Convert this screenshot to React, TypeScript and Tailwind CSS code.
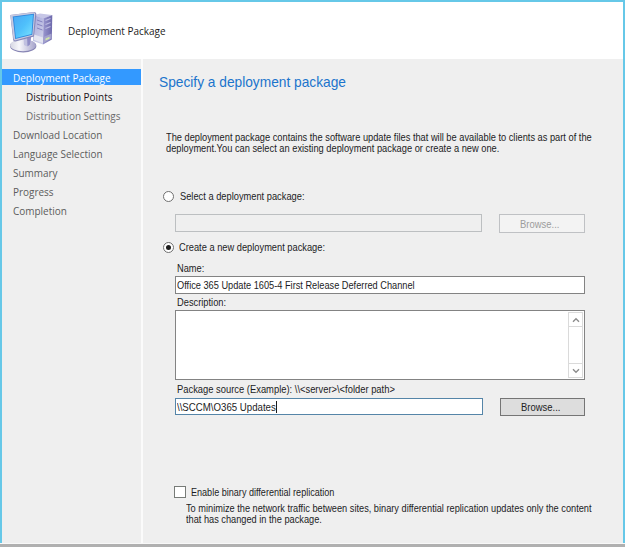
import type { ReactNode } from 'react';

const steps = [
  { label: 'Deployment Package', className: 'text-white', active: true, indent: false },
  { label: 'Distribution Points', className: 'text-[#1a1420]', active: false, indent: true },
  { label: 'Distribution Settings', className: 'text-[#6b6b6b]', active: false, indent: true },
  { label: 'Download Location', className: 'text-[#5c5c5c]', active: false, indent: false },
  { label: 'Language Selection', className: 'text-[#5c5c5c]', active: false, indent: false },
  { label: 'Summary', className: 'text-[#5c5c5c]', active: false, indent: false },
  { label: 'Progress', className: 'text-[#5c5c5c]', active: false, indent: false },
  { label: 'Completion', className: 'text-[#5c5c5c]', active: false, indent: false },
];

function Label({ children, className = '' }: { children: ReactNode; className?: string }) {
  return (
    <span className={`block w-max origin-left whitespace-pre text-[10.5px] leading-3 ${className}`}>
      {children}
    </span>
  );
}

function ComputerIcon() {
  return (
    <svg width="46" height="44" viewBox="0 0 46 44" className="shrink-0">
      <defs>
        <linearGradient id="screen" x1="0" y1="0" x2="1" y2="1">
          <stop offset="0" stopColor="#4aa8f4" />
          <stop offset="0.5" stopColor="#4fc0fb" />
          <stop offset="1" stopColor="#7ce4ff" />
        </linearGradient>
        <linearGradient id="front" x1="0" y1="0" x2="0.6" y2="1">
          <stop offset="0" stopColor="#a4a6dc" />
          <stop offset="1" stopColor="#cfd0e8" />
        </linearGradient>
        <linearGradient id="side" x1="0" y1="0" x2="1" y2="0">
          <stop offset="0" stopColor="#9a97cf" />
          <stop offset="1" stopColor="#6d69ab" />
        </linearGradient>
        <linearGradient id="base" x1="0" y1="0" x2="1" y2="0">
          <stop offset="0" stopColor="#d5d6e2" />
          <stop offset="0.35" stopColor="#f7f7fb" />
          <stop offset="1" stopColor="#a5a3cb" />
        </linearGradient>
      </defs>
      <path d="M25 5 L31 3.500 L43 5 L34.500 9 Z" fill="#c6c6e6" />
      <path d="M25 5 L34.500 8.500 L34 34.500 L24 31 Z" fill="url(#front)" />
      <path d="M34.500 8.500 L43.300 5 L42.800 29.500 L34 34.500 Z" fill="url(#side)" />
      <path d="M28 10 L33.500 12 M28 14 L33.500 16 M28 18 L33.500 20" stroke="#8683c0" strokeWidth="1" />
      <path d="M36.500 10.500 L41.500 8.500 M36.500 14.500 L41.500 12.500 M36.500 18.500 L41.500 16.500" stroke="#bcbbe2" strokeWidth="1.300" />
      <path d="M25 24.500 L34 27.500 L34 33 L25 30 Z" fill="#e4e5f1" />
      <path d="M34.500 27 L42.500 23.500 L42.500 28.500 L34.500 33 Z" fill="#a3a1cc" />
      <path d="M36.500 28.500 L40.500 26.700 L40.500 28.700 L36.500 30.500 Z" fill="#cfe5a8" />
      <ellipse cx="14.200" cy="36" rx="13.200" ry="6.400" fill="#8785b4" />
      <ellipse cx="14" cy="35.200" rx="12.800" ry="6" fill="url(#base)" />
      <path d="M14.500 26 L22.500 24.500 L21 34.500 Q18 37.500 15 35 Z" fill="#c0c0e0" />
      <path d="M18 26 L22.500 24.500 L21 34.500 L18.500 36.500 Z" fill="#8f8dc6" />
      <path d="M1.300 5 L25 2 Q27.500 2 27.300 4.500 L25 26.500 L6.500 31.500 Q4.500 31.700 4.200 30 Z" fill="#8586b8" />
      <path d="M1.300 5 L24.500 2.200 Q26.400 2.300 26.200 4.300 L24.200 25.600 L6 30.400 Q4.700 30 4.500 28.500 Z" fill="#c7c9df" />
      <path d="M3.700 6.500 L25 3.700 L23.300 24.700 L6.200 29 Z" fill="#2e86dc" />
      <path d="M4.700 7.300 L24 4.800 L22.500 23.900 L6.900 27.900 Z" fill="url(#screen)" />
    </svg>
  );
}

function Chevron({ down = false }: { down?: boolean }) {
  return (
    <svg width="8" height="6" viewBox="0 0 8 6" fill="none" stroke="#8c8c8c" strokeWidth="1.400">
      <path d={down ? 'M1 1.200 L4 4.200 L7 1.200' : 'M1 4.800 L4 1.800 L7 4.800'} />
    </svg>
  );
}

function Radio({ checked = false }: { checked?: boolean }) {
  return (
    <span className="flex size-[11px] shrink-0 items-center justify-center rounded-full border border-[#707070] bg-white">
      {checked && <span className="size-[5px] rounded-full bg-[#1c1c1c]" />}
    </span>
  );
}

export default function App() {
  return (
    <div className="flex h-[547px] w-[625px] flex-col overflow-hidden bg-[#efefef] font-['Liberation_Sans',Arial,sans-serif] text-[#1c1c24]">
      <div className="flex min-h-0 flex-1 flex-col border-2 border-b-0 border-[#66c8e8]">
        <header className="flex h-[57px] shrink-0 bg-white pt-2 pl-[7px]">
          <ComputerIcon />
          <span className="mt-[13px] ml-[13px] block w-max origin-left scale-x-[0.866] font-['Open_Sans',sans-serif] text-[11.5px] leading-4 whitespace-nowrap text-[#1c1c1c]">
            Deployment Package
          </span>
        </header>

        <div className="flex min-h-0 flex-1">
          <nav className="w-[139px] shrink-0 pt-2.5 font-['Open_Sans',sans-serif] text-[11.5px]">
            {steps.map((s) => (
              <div
                key={s.label}
                className={`mb-[3px] h-4 leading-[18px] ${s.className} ${s.active ? 'bg-[#3399ff]' : ''} ${s.indent ? 'pl-6' : 'pl-[11px]'}`}
              >
                <span className="block w-max origin-left scale-x-[0.866] whitespace-nowrap">{s.label}</span>
              </div>
            ))}
          </nav>

          <main className="flex min-w-0 flex-1 flex-col border-l-2 border-[#fbfbfb] pl-4">
            <h1 className="mt-[14px] w-max origin-left scale-x-[0.915] text-[15px] leading-[18px] whitespace-nowrap text-[#1b74cc]">
              Specify a deployment package
            </h1>

            <div className="mt-10 ml-[7px]">
              <Label className="-mb-px scale-x-[0.883]">
                The deployment package contains the software update files that will be available to clients as part of the
              </Label>
              <Label className="scale-x-[0.885]">
                deployment.You can select an existing deployment package or create a new one.
              </Label>
            </div>

            <div className="mt-9 ml-1 flex h-3 items-center gap-1.5">
              <Radio />
              <Label className="scale-x-[0.885]">Select a deployment package:</Label>
            </div>

            <div className="mt-3 ml-4 flex items-start">
              <div className="h-[18px] w-[307px] border border-[#bcbfc1]" />
              <div className="ml-[17px] flex h-[19px] w-[86px] items-center justify-center border border-[#bfc1c4] bg-[#f3f3f3] text-[#9c9c9c]">
                <Label className="origin-center scale-x-[0.9]">Browse...</Label>
              </div>
            </div>

            <div className="mt-2 ml-1 flex h-3 items-center gap-[5px]">
              <Radio checked />
              <Label className="scale-x-[0.884]">Create a new deployment package:</Label>
            </div>

            <div className="ml-4 w-[410px]">
              <Label className="mt-[9px] ml-[2px] scale-x-[0.88]">Name:</Label>
              <div className="mt-[2px] flex h-[18px] items-center border border-[#838383] bg-white pl-px">
                <Label className="scale-x-[0.878]">Office 365 Update 1605-4 First Release Deferred Channel</Label>
              </div>

              <Label className="mt-[2px] ml-[2px] scale-x-[0.885]">Description:</Label>
              <div className="mt-[2px] flex h-[70px] justify-end border border-[#838383] bg-white p-px">
                <div className="flex w-[15px] flex-col justify-between border border-[#dadada]">
                  <div className="flex h-[14px] items-center justify-center border-b border-[#dadada]">
                    <Chevron />
                  </div>
                  <div className="flex h-[14px] items-center justify-center border-t border-[#dadada]">
                    <Chevron down />
                  </div>
                </div>
              </div>

              <Label className="mt-[3px] ml-[2px] scale-x-[0.893]">
                {'Package source (Example): \\\\<server>\\<folder path>'}
              </Label>
              <div className="mt-[3px] flex items-start">
                <div className="flex h-[17px] w-[308px] items-center border border-[#5585a8] bg-white pl-px">
                  <div className="flex w-[100px] items-center border-r border-[#1c1c1c]">
                    <Label className="scale-x-[0.92]">{'\\\\SCCM\\O365 Updates'}</Label>
                  </div>
                </div>
                <div className="ml-[17px] flex h-[18px] w-[85px] items-center justify-center border border-[#757575] bg-[#dddddd]">
                  <Label className="origin-center scale-x-[0.9]">Browse...</Label>
                </div>
              </div>
            </div>

            <div className="mt-[70px] ml-[15px] flex h-3 items-center gap-[5px]">
              <span className="size-3 border border-[#777b77] bg-white" />
              <Label className="scale-x-[0.863]">Enable binary differential replication</Label>
            </div>

            <div className="mt-1 ml-[27px]">
              <Label className="-mb-px scale-x-[0.878]">
                To minimize the network traffic between sites, binary differential replication updates only the content
              </Label>
              <Label className="scale-x-[0.878]">that has changed in the package.</Label>
            </div>
          </main>
        </div>
      </div>
      <footer className="h-1 shrink-0 border-t border-[#f8f8f8] bg-[#b0b0b0]" />
    </div>
  );
}
